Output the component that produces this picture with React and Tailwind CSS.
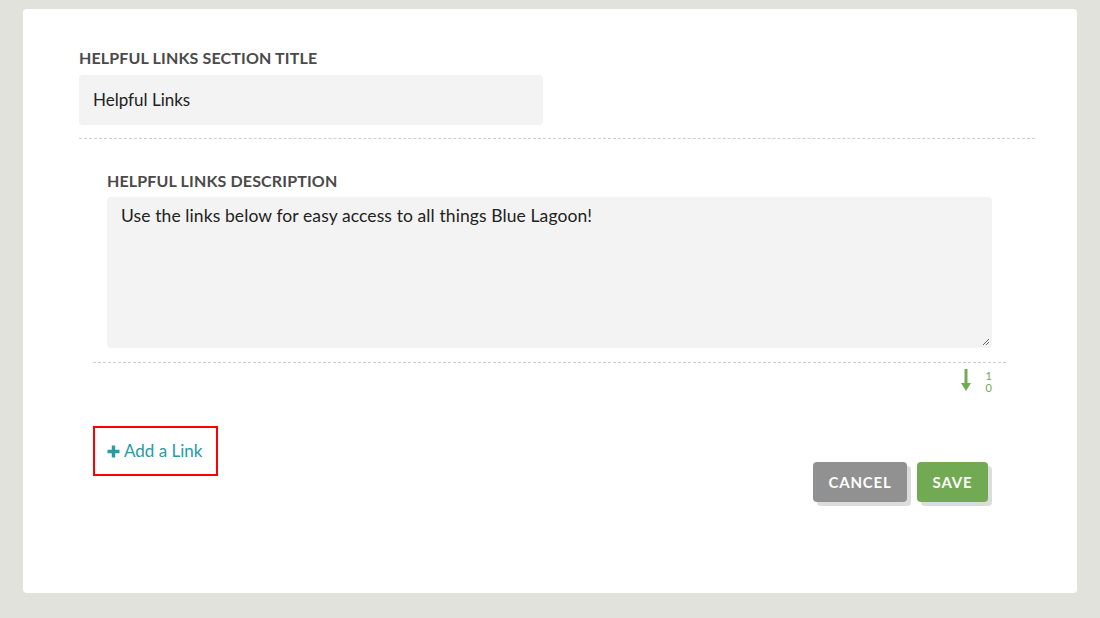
import React from "react";

export default function App() {
  const font = { fontFamily: "Lato, 'Noto Sans', sans-serif" };
  return (
    <div className="w-[1100px] h-[618px] bg-[#e2e2dc] pt-[9px] pl-[23px]" style={font}>
      <div className="w-[1054px] h-[584px] bg-white rounded-[4px] flex flex-col">
        <div className="pt-[39px] pl-[56px] pr-[42px]">
          <div className="text-[16px] font-bold text-[#4a4a4a] leading-[20px] tracking-[0.15px]">
            HELPFUL LINKS SECTION TITLE
          </div>
          <div className="mt-[7px] w-[464px] h-[50px] bg-[#f3f3f3] rounded-[4px] flex items-center px-[14px] text-[17px] text-[#222]">
            Helpful Links
          </div>
          <div className="mt-[13px] border-t border-dashed border-[#cfcfcf]" />
        </div>
        <div className="pl-[70px] pr-[71px]">
          <div className="pl-[14px] pr-[14px] pt-[32px]">
            <div className="text-[16px] font-bold text-[#4a4a4a] leading-[20px] tracking-[0.15px]">
              HELPFUL LINKS DESCRIPTION
            </div>
            <div className="relative mt-[6px] h-[151px] bg-[#f3f3f3] rounded-[4px] px-[14px] pt-[8px] text-[17.5px] text-[#222] leading-[22px] tracking-[0.1px]">
              Use the links below for easy access to all things Blue Lagoon!
              <svg className="absolute right-[2px] bottom-[2px]" width="8" height="8" viewBox="0 0 8 8">
                <path d="M7 1L1 7M7 4L4 7" stroke="#666" strokeWidth="1" />
              </svg>
            </div>
          </div>
          <div className="mt-[14px] border-t border-dashed border-[#cfcfcf]" />
          <div className="flex justify-end pr-[14px] pt-[6px] gap-[14px]">
            <svg width="12" height="22" viewBox="0 0 12 22">
              <path d="M6 0V16" stroke="#72aa52" strokeWidth="3" />
              <path d="M1 14L6 22L11 14Z" fill="#72aa52" />
            </svg>
            <div className="flex flex-col text-[11px] leading-[12px] text-[#72aa52] items-center pt-[1px]">
              <span>1</span>
              <span>0</span>
            </div>
          </div>
        </div>
        <div className="flex pl-[70px] pr-[89px] mt-[32px]">
          <div className="w-[125px] h-[50px] border-2 border-[#f00] flex items-center pl-[12px] text-[17px] text-[#2a9aa4] gap-[4px]">
            <svg width="13" height="13" viewBox="0 0 13 13">
              <path d="M6.5 0.5V12.5M0.5 6.5H12.5" stroke="#2a9aa4" strokeWidth="3.4" />
            </svg>
            <span>Add a Link</span>
          </div>
          <div className="flex-1" />
          <div className="flex gap-[10px] mt-[36px]">
            <button className="relative w-[94px] h-[40px] rounded-[4px] bg-[#919191] text-white text-[15px] font-bold tracking-[0.8px] shadow-[4px_4px_0_#dcdcdc]" style={font}>
              CANCEL
            </button>
            <button className="relative w-[71px] h-[40px] rounded-[4px] bg-[#71aa52] text-white text-[15px] font-bold tracking-[0.8px] shadow-[4px_4px_0_#dcdcdc]" style={font}>
              SAVE
            </button>
          </div>
        </div>
      </div>
    </div>
  );
}
